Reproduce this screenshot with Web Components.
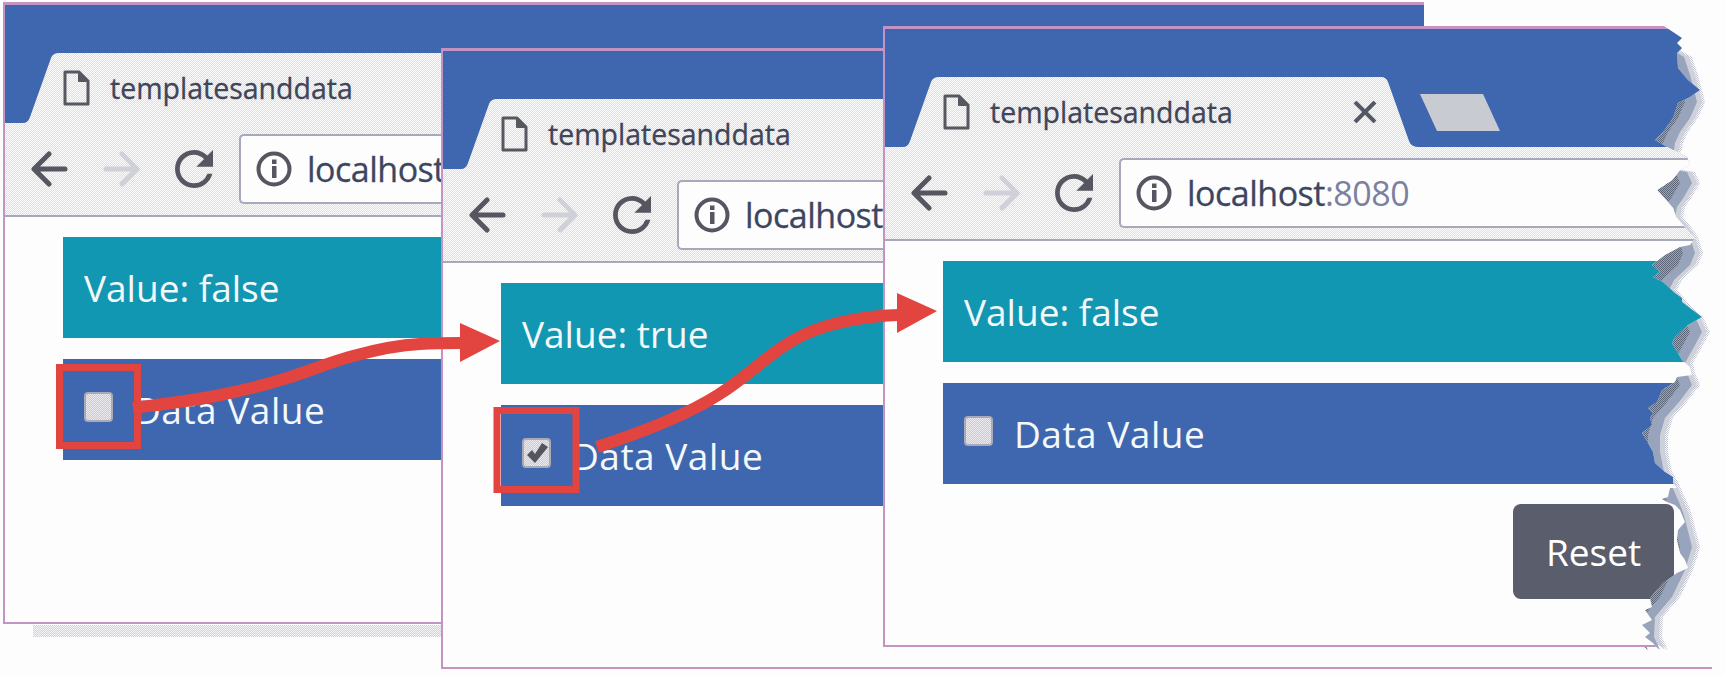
<!DOCTYPE html>
<html>
<head>
<meta charset="utf-8">
<title>templatesanddata</title>
<style>
    html, body {
        margin: 0;
        background: #fdfdfe;
    }
</style>
</head>
<body>
<app-desktop>
    <browser-window x="3" y="2" w="1421" h="622" url="localhost" shadow>
        <value-panel>Value: false</value-panel>
        <check-panel>Data Value</check-panel>
    </browser-window>
    <browser-window x="441" y="48" w="1271" h="621" url="localhost">
        <value-panel>Value: true</value-panel>
        <check-panel checked>Data Value</check-panel>
    </browser-window>
    <browser-window x="883" y="26" w="827" h="621" url="localhost" port=":8080" torn>
        <value-panel>Value: false</value-panel>
        <check-panel>Data Value</check-panel>
        <reset-button>Reset</reset-button>
    </browser-window>
    <page-annotations></page-annotations>
</app-desktop>

<template id="desktop-template">
<style>
    :host {
        display: block;
        position: relative;
        width: 1725px;
        height: 675px;
        overflow: hidden;
        font-family: "Open Sans", "Liberation Sans", sans-serif;
    }
</style>
<slot></slot>
</template>

<template id="window-template">
<style>
    :host {
        display: block;
        position: absolute;
        --chrome: repeating-conic-gradient(#dcdde5 0 25%, #fdfdfe 0 50%) 0 0 / 2px 2px;
    }

    .frame {
        position: relative;
        display: flex;
        flex-direction: column;
        height: 100%;
        box-sizing: border-box;
        background: #fdfdfe;
        border: 2px solid #c592c4;
        border-top-width: 3px;
        border-right: none;
    }

    .drop {
        display: none;
        position: absolute;
        left: 30px;
        right: 0;
        top: 100%;
        height: 12px;
        margin-top: 1px;
        background: repeating-conic-gradient(#d3d4da 0 25%, #f4f4f6 0 50%) 0 0 / 2px 2px;
    }

    :host([shadow]) .drop {
        display: block;
    }

    .tear {
        position: absolute;
        left: 0;
        top: 0;
        overflow: visible;
    }

    .strip {
        display: flex;
        align-items: flex-end;
        height: 118px;
        padding-left: 18px;
        background: #3e67b0;
        flex: none;
    }

    .tab {
        display: flex;
        align-items: center;
        box-sizing: border-box;
        width: 516px;
        height: 70px;
        padding: 0 42px 0 40px;
        flex: none;
        background: var(--chrome);
        clip-path: path("M0 70 Q5 70 7 64 L28 5 Q30 0 36 0 L478 0 Q483 0 485 5 L506 64 Q508 70 516 70 Z");
        color: #404559;
        font-size: 28.5px;
        -webkit-text-stroke: 0.3px;
    }

    .tab .page {
        margin-right: 20px;
        flex: none;
    }

    .tab .close {
        margin-left: auto;
        flex: none;
    }

    .ghost {
        width: 80px;
        height: 37px;
        margin: 0 0 16px 1px;
        background: #c9cbd3;
        clip-path: polygon(0 0, 63px 0, 80px 37px, 17px 37px);
        flex: none;
    }

    .bar {
        display: flex;
        align-items: center;
        height: 94px;
        box-sizing: border-box;
        padding-left: 26px;
        border-bottom: 2px solid #a7a9ba;
        background: var(--chrome);
        flex: none;
    }

    .bar .forward {
        margin-left: 35px;
    }

    .bar .reload {
        margin-left: 35px;
    }

    .address {
        display: flex;
        align-items: center;
        flex: 1;
        height: 70px;
        margin-left: 26px;
        box-sizing: border-box;
        padding-left: 15px;
        background: #fdfdfe;
        border: 2px solid #a6a9bb;
        border-right: none;
        border-radius: 5px 0 0 5px;
        font-size: 34px;
        letter-spacing: -0.5px;
        color: #3d4660;
        -webkit-text-stroke: 0.3px;
        white-space: nowrap;
    }

    .address svg {
        margin-right: 15px;
        flex: none;
    }

    .port {
        color: #7c80a0;
        -webkit-text-stroke: 0;
    }

    .content {
        display: flex;
        flex-direction: column;
        gap: 21px;
        padding: 20px 0 0 58px;
    }
</style>
<svg class="tear" hidden></svg>
<div class="frame">
    <div class="strip">
        <div class="tab">
            <svg class="page" width="27" height="36" viewBox="0 0 27 36" fill="none" stroke="#56585f" stroke-width="3" stroke-linejoin="round">
                <path d="M2 2h14l9 9v23H2z"/>
                <path d="M16 2v9h9" fill="#56585f" stroke-width="2"/>
            </svg>
            <span class="title"></span>
            <svg class="close" width="24" height="22" viewBox="0 0 24 22" stroke="#545865" stroke-width="4">
                <path d="M2 1l20 20M22 1L2 21"/>
            </svg>
        </div>
        <div class="ghost"></div>
    </div>
    <div class="bar">
        <svg class="back" width="37" height="36" viewBox="0 0 37 36" fill="none" stroke="#55565f" stroke-width="5" stroke-linecap="round" stroke-linejoin="round">
            <path d="M34 18H4M18 3L3 18l15 15"/>
        </svg>
        <svg class="forward" width="37" height="36" viewBox="0 0 37 36" fill="none" stroke="#d0d1d8" stroke-width="5" stroke-linecap="round" stroke-linejoin="round">
            <path d="M3 18h30M19 3l15 15-15 15"/>
        </svg>
        <svg class="reload" width="38" height="38" viewBox="4 4 16 16" fill="#55565f">
            <path d="M17.65 6.35A7.958 7.958 0 0 0 12 4c-4.42 0-7.99 3.58-7.99 8s3.57 8 7.99 8c3.73 0 6.84-2.55 7.73-6h-2.08A5.99 5.99 0 0 1 12 18c-3.31 0-6-2.69-6-6s2.69-6 6-6c1.66 0 3.14.69 4.22 1.78L13 11h7V4l-2.35 2.35z"/>
        </svg>
        <div class="address">
            <svg width="36" height="36" viewBox="0 0 36 36">
                <circle cx="18" cy="18" r="15.5" fill="none" stroke="#55565f" stroke-width="4"/>
                <rect x="16" y="15" width="4.5" height="12" fill="#55565f"/>
                <rect x="16" y="8.5" width="4.5" height="4.5" fill="#55565f"/>
            </svg>
            <span class="host"></span><span class="port"></span>
        </div>
    </div>
    <div class="content">
        <slot></slot>
    </div>
</div>
<div class="drop"></div>
</template>

<template id="value-template">
<style>
    :host {
        display: flex;
        align-items: center;
        height: 101px;
        padding-left: 21px;
        background: #1297b2;
        color: #f5f8fa;
        font-size: 37px;
        white-space: nowrap;
    }
</style>
<slot></slot>
</template>

<template id="check-template">
<style>
    :host {
        display: flex;
        align-items: center;
        height: 101px;
        padding-left: 21px;
        background: #3e67b0;
        color: #f5f8fa;
        font-size: 37px;
        letter-spacing: 0.5px;
        white-space: nowrap;
    }

    .box {
        display: flex;
        align-items: center;
        justify-content: center;
        width: 29px;
        height: 30px;
        margin: 0 21px 5px 0;
        box-sizing: border-box;
        border: 2px solid #a9a9b8;
        border-radius: 4px;
        background: repeating-conic-gradient(#c9cad2 0 25%, #e9e9ee 0 50%) 0 0 / 2px 2px;
        flex: none;
    }

    svg {
        display: none;
    }

    :host([checked]) svg {
        display: block;
    }
</style>
<div class="box">
    <svg width="22" height="20" viewBox="0 0 22 20">
        <path d="M1 12l5-5 3 4L16 0l6 4L9 20z" fill="#54555f"/>
    </svg>
</div>
<slot></slot>
</template>

<template id="reset-template">
<style>
    :host {
        display: flex;
        align-items: center;
        justify-content: center;
        align-self: flex-end;
        width: 161px;
        height: 95px;
        margin: -1px 36px 0 0;
        border-radius: 8px;
        background: #5a5d6c;
        color: #fff;
        font-size: 37px;
    }
</style>
<slot></slot>
</template>

<template id="annotations-template">
<style>
    :host {
        display: block;
        position: absolute;
        left: 0;
        top: 0;
        width: 1725px;
        height: 675px;
        pointer-events: none;
    }
</style>
<svg width="1725" height="675" viewBox="0 0 1725 675" fill="none">
    <rect x="59.5" y="367.5" width="78" height="78" stroke="#e2443f" stroke-width="7"/>
    <rect x="497" y="410.5" width="79" height="79" stroke="#e2443f" stroke-width="7"/>
    <path d="M133 408C165 404 190 401 220 395C245 390 265 385 287 378C310 371 330 362 353 356C375 350 400 345 420 344C435 343 450 343 462 343" stroke="#e2443f" stroke-width="12"/>
    <path d="M460 323L500 341L460 362Z" fill="#e2443f"/>
    <path d="M597 447C640 433 685 416 718 395C755 372 775 345 815 330C842 320 870 316 899 315" stroke="#e2443f" stroke-width="12"/>
    <path d="M897 293L937 311L897 333Z" fill="#e2443f"/>
</svg>
</template>

<script>
    // outline of the torn right side of the last window, in page coordinates
    const TEAR_EDGE = [
        [1662, 25], [1667, 28], [1682, 38], [1677, 43], [1682, 48], [1677, 53], [1678, 68], [1688, 80],
        [1700, 90], [1690, 97], [1678, 103], [1673, 118], [1663, 132], [1655, 140], [1667, 147], [1687, 157],
        [1690, 165], [1680, 170], [1672, 180], [1657, 190], [1666, 200], [1673, 208], [1676, 217], [1683, 225],
        [1695, 238], [1690, 245], [1680, 247], [1665, 255], [1652, 265], [1660, 272], [1653, 277], [1663, 282],
        [1675, 293], [1682, 298], [1682, 302], [1702, 317], [1688, 325], [1675, 337], [1672, 343], [1682, 360],
        [1690, 367], [1692, 375], [1677, 377], [1675, 382], [1662, 390], [1657, 402], [1648, 408], [1653, 413],
        [1650, 418], [1652, 425], [1642, 433], [1648, 443], [1653, 452], [1655, 463], [1665, 472], [1673, 477],
        [1673, 483], [1677, 488], [1670, 488], [1668, 497], [1662, 499], [1667, 502], [1675, 505], [1680, 510],
        [1685, 522], [1678, 530], [1677, 540], [1680, 553], [1685, 560], [1688, 568], [1677, 573], [1663, 583],
        [1650, 598], [1652, 607], [1645, 610], [1652, 620], [1642, 625], [1650, 633], [1645, 637], [1653, 643],
        [1658, 649]
    ];

    const TEAR_SHADOW = [
        [1677, 48], [1692, 57], [1698, 75], [1702, 90], [1705, 102], [1698, 118], [1688, 132], [1683, 143],
        [1682, 150], [1675, 160], [1683, 170], [1695, 172], [1700, 183], [1692, 197], [1685, 207], [1683, 217],
        [1692, 228], [1698, 237], [1703, 253], [1698, 265], [1682, 280], [1677, 290], [1690, 305], [1703, 317],
        [1710, 332], [1702, 347], [1693, 363], [1695, 373], [1700, 385], [1687, 402], [1673, 418], [1668, 435],
        [1668, 452], [1672, 472], [1678, 482], [1687, 502], [1692, 515], [1695, 527], [1700, 547], [1693, 570],
        [1680, 597], [1663, 617], [1662, 637], [1668, 650], [1662, 645], [1630, 645], [1630, 48]
    ];

    const toPoints = list => list.map(p => p.join(',')).join(' ');

    class AppDesktop extends HTMLElement {
        constructor() {
            super();
            this._shadowRoot = this.attachShadow({ mode: 'open' });
            this._shadowRoot.appendChild(document.getElementById('desktop-template').content.cloneNode(true));
        }
    }

    class BrowserWindow extends HTMLElement {
        constructor() {
            super();
            this._shadowRoot = this.attachShadow({ mode: 'open' });
            this._shadowRoot.appendChild(document.getElementById('window-template').content.cloneNode(true));

            this.$frame = this._shadowRoot.querySelector('.frame');
            this.$tear = this._shadowRoot.querySelector('.tear');
            this.$title = this._shadowRoot.querySelector('.title');
            this.$host = this._shadowRoot.querySelector('.host');
            this.$port = this._shadowRoot.querySelector('.port');
        }

        connectedCallback() {
            this.style.left = this.getAttribute('x') + 'px';
            this.style.top = this.getAttribute('y') + 'px';
            this.style.width = this.getAttribute('w') + 'px';
            this.style.height = this.getAttribute('h') + 'px';

            this.$title.textContent = this.getAttribute('tab-title') || 'templatesanddata';
            this.$host.textContent = this.getAttribute('url') || '';
            this.$port.textContent = this.getAttribute('port') || '';

            if (this.hasAttribute('torn')) {
                this._renderTear();
            }
        }

        _renderTear() {
            const x = Number(this.getAttribute('x'));
            const y = Number(this.getAttribute('y'));
            const outline = [[x, y], ...TEAR_EDGE, [x, 649]];

            this.$frame.style.clipPath = 'polygon(' + outline.map(p => (p[0] - x) + 'px ' + (p[1] - y) + 'px').join(',') + ')';

            const mask = [...TEAR_EDGE, [1725, 649], [1725, 20], [1662, 20]];
            this.$tear.removeAttribute('hidden');
            this.$tear.setAttribute('width', 1725 - x);
            this.$tear.setAttribute('height', 675 - y);
            this.$tear.setAttribute('viewBox', x + ' ' + y + ' ' + (1725 - x) + ' ' + (675 - y));
            // shadow layers run from a pale dither at the rim to a dark dither at the tear
            this.$tear.innerHTML = `
                <defs>
                    <pattern id="pale" width="2" height="2" patternUnits="userSpaceOnUse">
                        <rect width="2" height="2" fill="#fdfdfe"/>
                        <rect width="1" height="1" fill="#c3c6d1"/>
                        <rect x="1" y="1" width="1" height="1" fill="#c3c6d1"/>
                    </pattern>
                    <pattern id="dark" width="2" height="2" patternUnits="userSpaceOnUse">
                        <rect width="2" height="2" fill="#98a4bb"/>
                        <rect width="1" height="1" fill="#5d6678"/>
                        <rect x="1" y="1" width="1" height="1" fill="#5d6678"/>
                    </pattern>
                </defs>
                <polygon points="${toPoints(mask)}" fill="#fdfdfe"/>
                <polygon points="${toPoints(TEAR_SHADOW)}" fill="url(#pale)"/>
                <polygon points="${toPoints(TEAR_SHADOW)}" fill="#cfd1da" transform="translate(-3 0)"/>
                <polygon points="${toPoints(TEAR_SHADOW)}" fill="#98a4bb" transform="translate(-8 0)"/>
                <polygon points="${toPoints(TEAR_SHADOW)}" fill="url(#dark)" transform="translate(-20 0)"/>
            `;
        }
    }

    class ValuePanel extends HTMLElement {
        constructor() {
            super();
            this._shadowRoot = this.attachShadow({ mode: 'open' });
            this._shadowRoot.appendChild(document.getElementById('value-template').content.cloneNode(true));
        }
    }

    class CheckPanel extends HTMLElement {
        constructor() {
            super();
            this._shadowRoot = this.attachShadow({ mode: 'open' });
            this._shadowRoot.appendChild(document.getElementById('check-template').content.cloneNode(true));
        }
    }

    class ResetButton extends HTMLElement {
        constructor() {
            super();
            this._shadowRoot = this.attachShadow({ mode: 'open' });
            this._shadowRoot.appendChild(document.getElementById('reset-template').content.cloneNode(true));
        }
    }

    class PageAnnotations extends HTMLElement {
        constructor() {
            super();
            this._shadowRoot = this.attachShadow({ mode: 'open' });
            this._shadowRoot.appendChild(document.getElementById('annotations-template').content.cloneNode(true));
        }
    }

    window.customElements.define('app-desktop', AppDesktop);
    window.customElements.define('browser-window', BrowserWindow);
    window.customElements.define('value-panel', ValuePanel);
    window.customElements.define('check-panel', CheckPanel);
    window.customElements.define('reset-button', ResetButton);
    window.customElements.define('page-annotations', PageAnnotations);
</script>
</body>
</html>
